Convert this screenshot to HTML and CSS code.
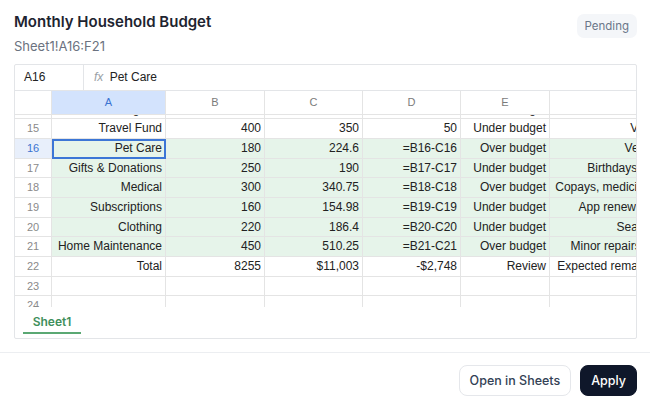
FILE: index.html
```html
<!DOCTYPE html>
<html lang="en">
<head>
  <meta charset="UTF-8">
  <meta name="viewport" content="width=device-width, initial-scale=1.0">
  <title>Monthly Household Budget</title>
  <link rel="stylesheet" href="styles.css">
</head>
<body>
  <div class="dialog">
    <div class="dialog-body">
      <div class="dialog-head">
        <div>
          <h1 class="title">Monthly Household Budget</h1>
          <div class="range">Sheet1!A16:F21</div>
        </div>
        <span class="badge">Pending</span>
      </div>

      <div class="sheet">
        <div class="formula-bar">
          <div class="name-box">A16</div>
          <div class="formula"><span class="fx">fx</span> Pet Care</div>
        </div>

        <div class="row col-head">
          <div class="rh"></div>
          <div class="ch active">A</div>
          <div class="ch">B</div>
          <div class="ch">C</div>
          <div class="ch">D</div>
          <div class="ch">E</div>
          <div class="ch"></div>
        </div>

        <div class="grid-body">
          <div class="rows">
            <div class="row">
              <div class="rh">14</div>
              <div class="c">Dining Out</div><div class="c">300</div><div class="c">280</div>
              <div class="c">20</div><div class="c">Under budget</div><div class="c">Takeout</div>
            </div>
            <div class="row">
              <div class="rh">15</div>
              <div class="c">Travel Fund</div><div class="c">400</div><div class="c">350</div>
              <div class="c">50</div><div class="c">Under budget</div><div class="c">Vacation trip</div>
            </div>
            <div class="row sel">
              <div class="rh">16</div>
              <div class="c cur">Pet Care</div><div class="c">180</div><div class="c">224.6</div>
              <div class="c">=B16-C16</div><div class="c">Over budget</div><div class="c">Vet checkups</div>
            </div>
            <div class="row sel">
              <div class="rh">17</div>
              <div class="c">Gifts &amp; Donations</div><div class="c">250</div><div class="c">190</div>
              <div class="c">=B17-C17</div><div class="c">Under budget</div><div class="c">Birthdays &amp; holidays</div>
            </div>
            <div class="row sel">
              <div class="rh">18</div>
              <div class="c">Medical</div><div class="c">300</div><div class="c">340.75</div>
              <div class="c">=B18-C18</div><div class="c">Over budget</div><div class="c">Copays, medicines, dental</div>
            </div>
            <div class="row sel">
              <div class="rh">19</div>
              <div class="c">Subscriptions</div><div class="c">160</div><div class="c">154.98</div>
              <div class="c">=B19-C19</div><div class="c">Under budget</div><div class="c">App renewals, movies</div>
            </div>
            <div class="row sel">
              <div class="rh">20</div>
              <div class="c">Clothing</div><div class="c">220</div><div class="c">186.4</div>
              <div class="c">=B20-C20</div><div class="c">Under budget</div><div class="c">Seasonal wear</div>
            </div>
            <div class="row sel">
              <div class="rh">21</div>
              <div class="c">Home Maintenance</div><div class="c">450</div><div class="c">510.25</div>
              <div class="c">=B21-C21</div><div class="c">Over budget</div><div class="c">Minor repairs, plumbing</div>
            </div>
            <div class="row">
              <div class="rh">22</div>
              <div class="c">Total</div><div class="c">8255</div><div class="c">$11,003</div>
              <div class="c">-$2,748</div><div class="c">Review</div><div class="c">Expected remaining funds</div>
            </div>
            <div class="row">
              <div class="rh">23</div>
              <div class="c"></div><div class="c"></div><div class="c"></div>
              <div class="c"></div><div class="c"></div><div class="c"></div>
            </div>
            <div class="row">
              <div class="rh">24</div>
              <div class="c"></div><div class="c"></div><div class="c"></div>
              <div class="c"></div><div class="c"></div><div class="c"></div>
            </div>
          </div>
        </div>

        <div class="tabs">
          <span class="tab">Sheet1</span>
        </div>
      </div>
    </div>

    <div class="dialog-footer">
      <button class="btn btn-outline">Open in Sheets</button>
      <button class="btn btn-dark">Apply</button>
    </div>
  </div>
</body>
</html>
```

FILE: styles.css
```css
* {
  margin: 0;
  padding: 0;
  box-sizing: border-box;
}

body {
  background: #fff;
  font-family: 'Inter', 'Noto Sans', sans-serif;
  color: #1f2937;
}

.dialog {
  width: 650px;
  height: 408px;
  background: #fff;
}

.dialog-body {
  padding: 12px 13px 0 14px;
}

.dialog-head {
  display: flex;
  justify-content: space-between;
  align-items: flex-start;
}

.title {
  font-size: 15px;
  line-height: 20px;
  font-weight: 600;
  color: #1e2430;
}

.range {
  margin-top: 5px;
  font-size: 13px;
  line-height: 18px;
  color: #6b7280;
}

.badge {
  margin-top: 2px;
  padding: 4px 8px;
  border-radius: 7px;
  background: #f4f6f9;
  color: #6b7789;
  font-size: 11.5px;
  line-height: 16px;
}

/* spreadsheet preview */

.sheet {
  margin-top: 9px;
  border: 1px solid #e3e5e8;
  border-radius: 2px;
  overflow: hidden;
  font-family: 'Liberation Sans', Arial, sans-serif;
}

.formula-bar {
  display: flex;
  height: 26px;
  border-bottom: 1px solid #e3e5e8;
  font-size: 12px;
  color: #222;
}

.name-box {
  width: 69px;
  padding-left: 9px;
  line-height: 25px;
  border-right: 1px solid #e3e5e8;
}

.formula {
  padding-left: 10px;
  line-height: 25px;
}

.fx {
  font-style: italic;
  color: #9aa0a6;
  margin-right: 3px;
}

.row {
  display: grid;
  grid-template-columns: 37px 114px 99px 98px 98px 89px 150px;
  height: 19.7px;
  width: max-content;
}

.row > div {
  border-right: 1px solid #e4e4e4;
  border-bottom: 1px solid #e4e4e4;
  white-space: nowrap;
  overflow: hidden;
}

.col-head {
  height: 24px;
}

.col-head .ch {
  text-align: center;
  font-size: 11px;
  line-height: 23px;
  color: #7b7b7b;
}

.col-head .ch.active {
  background: #d3e3fd;
  color: #3b73d1;
}

.grid-body {
  height: 192px;
  overflow: hidden;
}

.rows .row:first-child {
  margin-top: -15.4px;
}

.rh {
  text-align: center;
  font-size: 11px;
  line-height: 19px;
  color: #8a8a8a;
}

.c {
  text-align: right;
  padding: 0 3px;
  font-size: 12px;
  line-height: 19px;
  color: #222;
}

.row.sel .c {
  background: #e6f4ea;
}

.row:nth-child(3) .rh {
  background: #e8effb;
  color: #3b73d1;
}

.c.cur {
  outline: 2px solid #3c76d6;
  outline-offset: -2px;
}

.tabs {
  height: 31px;
  padding-left: 8px;
  display: flex;
  align-items: flex-end;
}

.tab {
  width: 58px;
  padding-bottom: 3px;
  text-align: center;
  font-family: 'Inter', sans-serif;
  font-size: 12px;
  font-weight: 600;
  line-height: 14px;
  color: #3f8f5c;
  border-bottom: 2px solid #5aa873;
  margin-bottom: 4px;
}

/* footer */

.dialog-footer {
  margin-top: 13px;
  border-top: 1px solid #eceef1;
  padding: 12px 13px 0 0;
  display: flex;
  justify-content: flex-end;
  gap: 9px;
}

.btn {
  height: 31px;
  border-radius: 8px;
  font-family: 'Inter', sans-serif;
  font-size: 12.5px;
  font-weight: 500;
  padding: 0 10px;
  cursor: pointer;
}

.btn-outline {
  background: #fff;
  color: #334155;
  border: 1px solid #e5e7eb;
}

.btn-dark {
  background: #0f172a;
  color: #fff;
  border: 1px solid #0f172a;
}
```
